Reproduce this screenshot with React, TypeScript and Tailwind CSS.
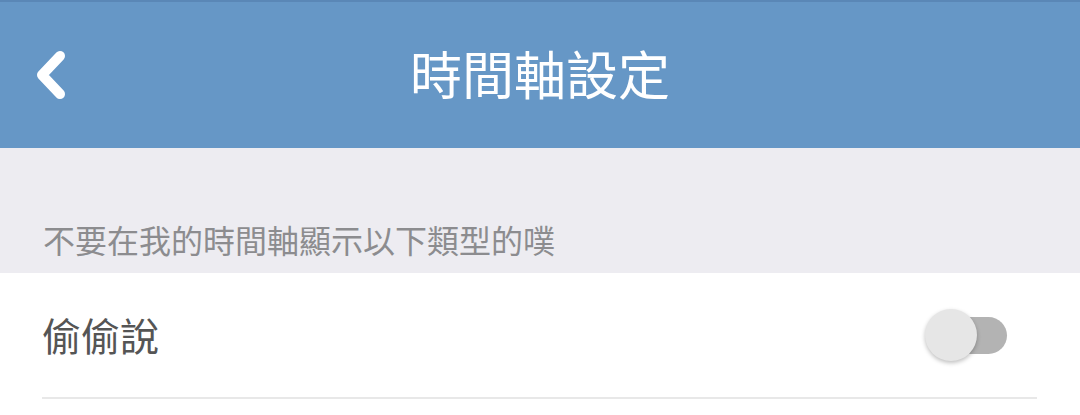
const cjk = { fontFamily: '"Noto Sans CJK TC", "Noto Sans", sans-serif' };

function BackIcon() {
  return (
    <svg width="40" height="60" viewBox="0 0 40 60" className="block">
      <path
        d="M24 11 L6 30 L24 49"
        fill="none"
        stroke="white"
        strokeWidth="10"
        strokeLinecap="round"
        strokeLinejoin="round"
      />
    </svg>
  );
}

function Toggle() {
  return (
    <div className="relative w-[82px] h-[52px] flex items-center mr-[30px]">
      <div className="ml-auto w-[76px] h-[37px] rounded-full bg-[#b3b3b3]" />
      <div className="absolute left-0 top-0 w-[52px] h-[52px] rounded-full bg-[#e6e6e6] shadow-[0_2px_4px_rgba(0,0,0,0.25)]" />
    </div>
  );
}

export default function App() {
  return (
    <div className="w-[1080px] h-[415px] bg-white overflow-hidden" style={cjk}>
      <header className="relative h-[148px] bg-[#6697c6] border-t-2 border-[#5a87b6] flex items-center justify-center">
        <button type="button" className="absolute left-[36px] top-[43px]">
          <BackIcon />
        </button>
        <h1 className="text-[52px] leading-none text-white font-normal -mt-[5px]">時間軸設定</h1>
      </header>
      <div className="h-[125px] bg-[#edecf1] flex items-end px-[43px] pb-[18px]">
        <p className="text-[32px] leading-none text-[#8c8c8f]">不要在我的時間軸顯示以下類型的噗</p>
      </div>
      <div className="pl-[42px] pr-[43px]">
        <div className="h-[126px] flex items-center justify-between border-b-2 border-[#e8e8e8]">
          <span className="text-[39px] leading-none text-[#555555] mb-[2px]">偷偷說</span>
          <Toggle />
        </div>
      </div>
    </div>
  );
}
